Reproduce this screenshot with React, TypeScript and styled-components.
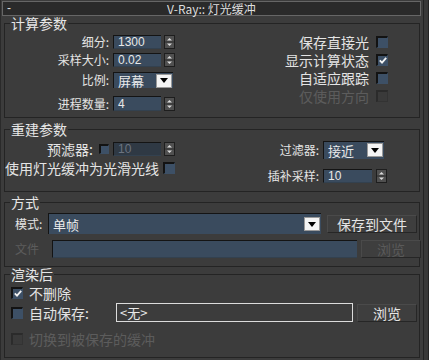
import React from 'react';
import styled, { createGlobalStyle } from 'styled-components';

const CJK = `'Noto Sans CJK SC', 'Liberation Sans', sans-serif`;
const LATIN = `'Liberation Sans', 'Noto Sans CJK SC', sans-serif`;

const GlobalStyle = createGlobalStyle`
	html, body { margin: 0; padding: 0; background: #3c3c3c; }
	body { font-family: ${CJK}; color: #e4e4e4; overflow: hidden; }
	* { box-sizing: border-box; }
`;

// Frame
const Frame = styled.div`
	display: flex;
	width: 429px;
	height: 360px;
	background: #3c3c3c;
`;

const Panel = styled.div`
	width: 422px;
	padding: 0 1px 0 1px;
	border-left: 1px solid #2a2a2a;
`;

const ScrollStrip = styled.div`
	flex: 1;
	margin-left: 1px;
	border-left: 1px solid #232323;
	border-right: 1px solid #232323;
	background: #383838;
`;

const TitleBar = styled.div`
	display: grid;
	grid-template-columns: 1fr auto 1fr;
	align-items: center;
	height: 15px;
	margin-top: 1px;
	border: 1px solid #666;
	background: #2a2a2a;
	font-size: 12px;
	line-height: 13px;
	color: #dedede;
`;

const Collapse = styled.span`
	padding-left: 4px;
	font-family: ${LATIN};
`;

// Groups
const Group = styled.fieldset<{ $h: number; $mt?: number }>`
	margin: ${p => p.$mt ?? 0}px 1px 0 2px;
	padding: 0;
	height: ${p => p.$h}px;
	border: 1px solid #242424;
	min-width: 0;
`;

const Legend = styled.legend`
	margin-left: 5px;
	padding: 0 1px;
	height: 14px;
	font-size: 14px;
	line-height: 14px;
	color: #e6e6e6;
`;

const SplitBody = styled.div<{ $pt: number; $pr: number }>`
	display: flex;
	justify-content: space-between;
	align-items: flex-start;
	padding: ${p => p.$pt}px ${p => p.$pr}px 0 0;
`;

const StackBody = styled.div<{ $pt: number; $pl: number; $gap?: number }>`
	display: flex;
	flex-direction: column;
	gap: ${p => p.$gap ?? 0}px;
	padding: ${p => p.$pt}px 0 0 ${p => p.$pl}px;
`;

const FieldGrid = styled.div<{ $label: number; $rows: string; $rowGap?: number }>`
	display: grid;
	grid-template-columns: ${p => (p.$label ? `${p.$label}px` : 'auto')} auto;
	grid-template-rows: ${p => p.$rows};
	column-gap: 4px;
	row-gap: ${p => p.$rowGap ?? 0}px;
	align-items: center;
`;

const CheckColumn = styled.div<{ $width?: number }>`
	display: flex;
	flex-direction: column;
	align-items: flex-end;
	${p => (p.$width ? `width: ${p.$width}px;` : '')}
`;

const Row = styled.div<{ $h: number; $gap?: number; $end?: boolean; $mt?: number }>`
	display: flex;
	align-items: center;
	justify-content: ${p => (p.$end ? 'flex-end' : 'flex-start')};
	gap: ${p => p.$gap ?? 0}px;
	height: ${p => p.$h}px;
	margin-top: ${p => p.$mt ?? 0}px;
`;

const Label = styled.span<{ $size?: number; $off?: boolean; $w?: number; $mr?: number }>`
	font-size: ${p => p.$size ?? 14}px;
	line-height: ${p => p.$size ?? 14}px;
	color: ${p => (p.$off ? '#5c5c5c' : '#e4e4e4')};
	white-space: nowrap;
	margin-right: ${p => p.$mr ?? 0}px;
	${p => (p.$w ? `width: ${p.$w}px; flex: none;` : '')}
`;

const FieldLabel = styled(Label)`
	justify-self: end;
`;

const Controls = styled.div<{ $gap?: number; $ml?: number }>`
	display: flex;
	align-items: center;
	gap: ${p => p.$gap ?? 3}px;
	margin-left: ${p => p.$ml ?? 0}px;
`;

// Inputs
const Field = styled.div<{ $w: number; $h?: number; $off?: boolean }>`
	display: flex;
	align-items: center;
	flex: none;
	width: ${p => p.$w}px;
	height: ${p => p.$h ?? 14}px;
	padding-left: 4px;
	background: ${p => (p.$off ? '#2f3944' : '#3a4b5e')};
	border-top: 1px solid #141414;
	border-left: 1px solid #141414;
	border-bottom: 1px solid #33414f;
	font-family: ${LATIN};
	font-size: 12px;
	line-height: 12px;
	color: ${p => (p.$off ? '#6c7480' : '#e8e8e8')};
`;

const PathField = styled.div<{ $w: number; $h: number }>`
	display: flex;
	align-items: center;
	flex: none;
	width: ${p => p.$w}px;
	height: ${p => p.$h}px;
	padding-left: 3px;
	border: 1px solid #dcdcdc;
	font-size: 13px;
	line-height: 13px;
	color: #e8e8e8;
`;

const Select = styled.div<{ $w: number; $h: number }>`
	display: flex;
	align-items: center;
	justify-content: space-between;
	flex: none;
	width: ${p => p.$w}px;
	height: ${p => p.$h}px;
	padding: 0 1px 0 4px;
	background: #3a4b5e;
	border-top: 1px solid #141414;
	border-left: 1px solid #141414;
	font-size: 13px;
	line-height: 13px;
	color: #eaeaea;
`;

const DropButton = styled.span`
	display: flex;
	align-items: center;
	justify-content: center;
	width: 16px;
	height: 14px;
	background: #f4f4f4;
	border: 1px solid #9a9a9a;
`;

const Button = styled.div<{ $w: number; $h: number; $off?: boolean; $ml?: number }>`
	display: flex;
	align-items: center;
	justify-content: center;
	flex: none;
	width: ${p => p.$w}px;
	height: ${p => p.$h}px;
	margin-left: ${p => p.$ml ?? 0}px;
	background: #3e3e3e;
	border: 1px solid #262626;
	border-top-color: #4a4a4a;
	border-left-color: #4a4a4a;
	font-size: 14px;
	line-height: 14px;
	color: ${p => (p.$off ? '#5a5a5a' : '#e4e4e4')};
`;

const Box = styled.span<{ $size?: number; $off?: boolean }>`
	display: inline-flex;
	align-items: center;
	justify-content: center;
	flex: none;
	width: ${p => p.$size ?? 12}px;
	height: ${p => p.$size ?? 12}px;
	background: ${p => (p.$off ? '#3a3a3a' : '#3d5066')};
	border-top: 2px solid ${p => (p.$off ? '#2b2b2b' : '#131313')};
	border-left: 2px solid ${p => (p.$off ? '#2b2b2b' : '#131313')};
	border-right: 1px solid ${p => (p.$off ? '#333' : '#3d5066')};
	border-bottom: 1px solid ${p => (p.$off ? '#333' : '#3d5066')};
`;

function Check({ on, off, size }: { on?: boolean; off?: boolean; size?: number }) {
	return (
		<Box $size={size} $off={off}>
			{on && (
				<svg width="8" height="7" viewBox="0 0 8 7">
					<path d="M0.8 3.4 L3 5.6 L7.2 0.8" fill="none" stroke="#f2f2f2" strokeWidth="1.8" />
				</svg>
			)}
		</Box>
	);
}

function Spinner() {
	return (
		<svg width="11" height="14" viewBox="0 0 11 14" style={{ flex: 'none', display: 'block' }}>
			<rect x="0.5" y="0.5" width="10" height="13" fill="#505050" stroke="#1e1e1e" />
			<line x1="1" y1="7" x2="10" y2="7" stroke="#2c2c2c" />
			<path d="M3 5.5 L5.5 3 L8 5.5 Z" fill="#dadada" />
			<path d="M3 8.5 L5.5 11 L8 8.5 Z" fill="#dadada" />
		</svg>
	);
}

function Dropdown({ w, h, value }: { w: number; h: number; value: string }) {
	return (
		<Select $w={w} $h={h}>
			<span>{value}</span>
			<DropButton>
				<svg width="8" height="5" viewBox="0 0 8 5">
					<path d="M0 0 H8 L4 5 Z" fill="#000" />
				</svg>
			</DropButton>
		</Select>
	);
}

export default function App() {
	return (
		<>
			<GlobalStyle />
			<Frame>
				<Panel>
					<TitleBar>
						<Collapse>-</Collapse>
						<span>V-Ray:: 灯光缓冲</span>
						<span />
					</TitleBar>

					<Group $h={102}>
						<Legend>计算参数</Legend>
						<SplitBody $pt={3} $pr={31}>
							<FieldGrid $label={104} $rows="18px 18px 22px 25px">
								<FieldLabel $size={12}>细分:</FieldLabel>
								<Controls>
									<Field $w={48}>1300</Field>
									<Spinner />
								</Controls>
								<FieldLabel $size={12}>采样大小:</FieldLabel>
								<Controls>
									<Field $w={48}>0.02</Field>
									<Spinner />
								</Controls>
								<FieldLabel $size={12}>比例:</FieldLabel>
								<Controls>
									<Dropdown w={60} h={16} value="屏幕" />
								</Controls>
								<FieldLabel $size={12}>进程数量:</FieldLabel>
								<Controls>
									<Field $w={48} $h={15}>4</Field>
									<Spinner />
								</Controls>
							</FieldGrid>
							<CheckColumn>
								<Row $h={18} $gap={7}>
									<Label>保存直接光</Label>
									<Check />
								</Row>
								<Row $h={18} $gap={7}>
									<Label>显示计算状态</Label>
									<Check on />
								</Row>
								<Row $h={18} $gap={7}>
									<Label>自适应跟踪</Label>
									<Check />
								</Row>
								<Row $h={18} $gap={7}>
									<Label $off>仅使用方向</Label>
									<Check off />
								</Row>
							</CheckColumn>
						</SplitBody>
					</Group>

					<Group $h={70} $mt={4}>
						<Legend>重建参数</Legend>
						<SplitBody $pt={4} $pr={32}>
							<CheckColumn $width={170}>
								<Row $h={18} $end>
									<Label $mr={6}>预滤器:</Label>
									<Check size={10} />
									<Controls $ml={4}>
										<Field $w={48} $off>10</Field>
										<Spinner />
									</Controls>
								</Row>
								<Row $h={19} $gap={4} $end>
									<Label>使用灯光缓冲为光滑光线</Label>
									<Check />
								</Row>
							</CheckColumn>
							<FieldGrid $label={0} $rows="19px 19px" $rowGap={7}>
								<FieldLabel $size={12}>过滤器:</FieldLabel>
								<Controls>
									<Dropdown w={61} h={18} value="接近" />
								</Controls>
								<FieldLabel $size={12}>插补采样:</FieldLabel>
								<Controls $gap={4}>
									<Field $w={49}>10</Field>
									<Spinner />
								</Controls>
							</FieldGrid>
						</SplitBody>
					</Group>

					<Group $h={72} $mt={3}>
						<Legend>方式</Legend>
						<StackBody $pt={4} $pl={10} $gap={6}>
							<Row $h={21} $gap={6}>
								<Label $size={12} $w={27}>模式:</Label>
								<Dropdown w={273} h={21} value="单帧" />
								<Button $w={90} $h={18}>保存到文件</Button>
							</Row>
							<Row $h={18} $gap={4}>
								<Label $size={12} $w={33} $off>文件</Label>
								<Field $w={305} $h={18} />
								<Button $w={60} $h={18} $off>浏览</Button>
							</Row>
						</StackBody>
					</Group>

					<Group $h={91}>
						<Legend>渲染后</Legend>
						<StackBody $pt={3} $pl={6}>
							<Row $h={18} $gap={6}>
								<Check on />
								<Label>不删除</Label>
							</Row>
							<Row $h={19} $gap={6} $mt={1}>
								<Check />
								<Label $w={81}>自动保存:</Label>
								<PathField $w={237} $h={19}>&lt;无&gt;</PathField>
								<Button $w={60} $h={18} $ml={-2}>浏览</Button>
							</Row>
							<Row $h={18} $gap={6} $mt={8}>
								<Check off />
								<Label $off>切换到被保存的缓冲</Label>
							</Row>
						</StackBody>
					</Group>
				</Panel>
				<ScrollStrip />
			</Frame>
		</>
	);
}
